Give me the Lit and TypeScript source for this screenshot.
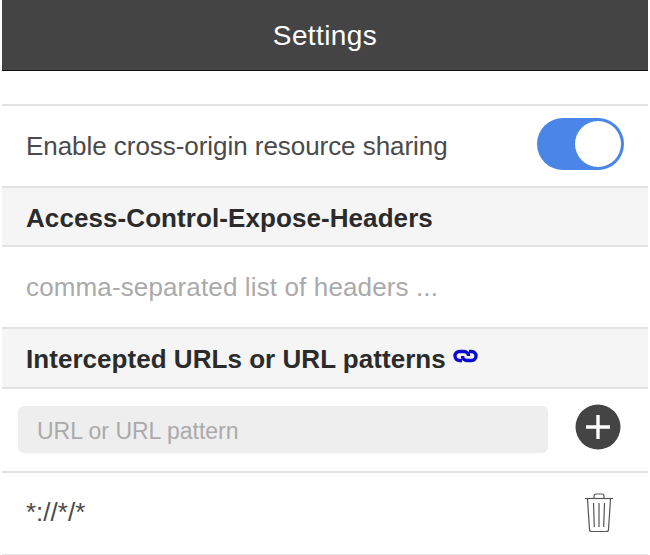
import { LitElement, html, css } from "lit";
import { customElement } from "lit/decorators.js";

@customElement("app-root")
export class AppRoot extends LitElement {
  static styles = css`
    :host {
      display: block;
      width: 650px;
      height: 555px;
      background: #fff;
      overflow: hidden;
      font-family: "Liberation Sans", Arial, sans-serif;
      color: #4a4a4a;
    }
    .page {
      margin: 0 2px;
      display: flex;
      flex-direction: column;
    }
    .bar {
      background: #444;
      border-bottom: 1px solid #111;
      color: #fff;
      font-size: 28px;
      letter-spacing: 0.4px;
      padding-top: 2px;
      box-sizing: content-box;
      height: 68px;
      display: flex;
      align-items: center;
      justify-content: center;
    }
    .spacer {
      height: 33px;
    }
    .row {
      box-sizing: border-box;
      border-top: 2px solid #e3e3e3;
      display: flex;
      align-items: center;
      font-size: 26px;
      padding: 0 24px;
    }
    .toggle-row {
      height: 82px;
      justify-content: space-between;
      letter-spacing: -0.05px;
    }
    .head {
      height: 59px;
      background: #f5f5f5;
      font-weight: 700;
      color: #2b2b2b;
      letter-spacing: 0.08px;
      padding-top: 3px;
    }
    .hint {
      height: 82px;
      color: #aaa;
      letter-spacing: 0.13px;
    }
    .head.tall {
      height: 60px;
      letter-spacing: 0.04px;
    }
    .add-row {
      height: 84px;
      padding: 0 27px 0 16px;
      justify-content: space-between;
    }
    .url-row {
      padding-right: 34px;
      justify-content: space-between;
      border-bottom: 2px solid #e3e3e3;
      height: 85px;
      padding-bottom: 2px;
    }
    .toggle {
      width: 87px;
      height: 52px;
      border-radius: 26px;
      background: #4a86e8;
      position: relative;
      margin: -4px 0 0;
    }
    .knob {
      position: absolute;
      right: 3px;
      top: 3px;
      width: 46px;
      height: 46px;
      border-radius: 50%;
      background: #fff;
    }
    .field {
      width: 530px;
      height: 47px;
      border-radius: 6px;
      background: #eee;
      color: #aaa;
      font-size: 23px;
      display: flex;
      align-items: center;
      padding: 4px 19px 0;
      box-sizing: border-box;
      margin-top: -2px;
    }
    .link {
      margin-left: 7px;
      margin-top: -7px;
      display: block;
    }
    .add {
      display: block;
      margin-top: -6px;
    }
    .trash {
      display: block;
    }
  `;

  render() {
    return html`
      <div class="page">
        <div class="bar">Settings</div>
        <div class="spacer"></div>
        <div class="row toggle-row">
          <span>Enable cross-origin resource sharing</span>
          <div class="toggle"><div class="knob"></div></div>
        </div>
        <div class="row head">Access-Control-Expose-Headers</div>
        <div class="row hint">comma-separated list of headers ...</div>
        <div class="row head tall">
          <span>Intercepted URLs or URL patterns</span>
          <svg class="link" width="25" height="14" viewBox="0 0 25 14" fill="none" stroke="#0a0ad0" stroke-width="3.4">
            <path d="M9 11.5 H6.5 a4.5 4.5 0 0 1 0 -9 H11 a4.5 4.5 0 0 1 4.5 4.5" />
            <path d="M16 2.5 H18.5 a4.5 4.5 0 0 1 0 9 H14 a4.5 4.5 0 0 1 -4.5 -4.5" />
          </svg>
        </div>
        <div class="row add-row">
          <div class="field">URL or URL pattern</div>
          <svg class="add" width="46" height="46" viewBox="0 0 46 46">
            <circle cx="23" cy="23" r="22.5" fill="#444" />
            <path d="M23 11 V35 M11 23 H35" stroke="#fff" stroke-width="3.4" />
          </svg>
        </div>
        <div class="row url-row">
          <span>*://*/*</span>
          <svg class="trash" width="30" height="40" viewBox="0 0 30 40" fill="none" stroke="#555" stroke-width="1.2">
            <path d="M1 5.5 H29" />
            <path d="M10 5 V3 a2 2 0 0 1 2 -2 H18 a2 2 0 0 1 2 2 V5" />
            <path d="M3.5 6 L5.5 36.5 a2 2 0 0 0 2 2 H22.5 a2 2 0 0 0 2 -2 L26.5 6" />
            <path d="M9.5 10 L10.3 34 M15 10 V34 M20.5 10 L19.7 34" />
          </svg>
        </div>
      </div>
    `;
  }
}
